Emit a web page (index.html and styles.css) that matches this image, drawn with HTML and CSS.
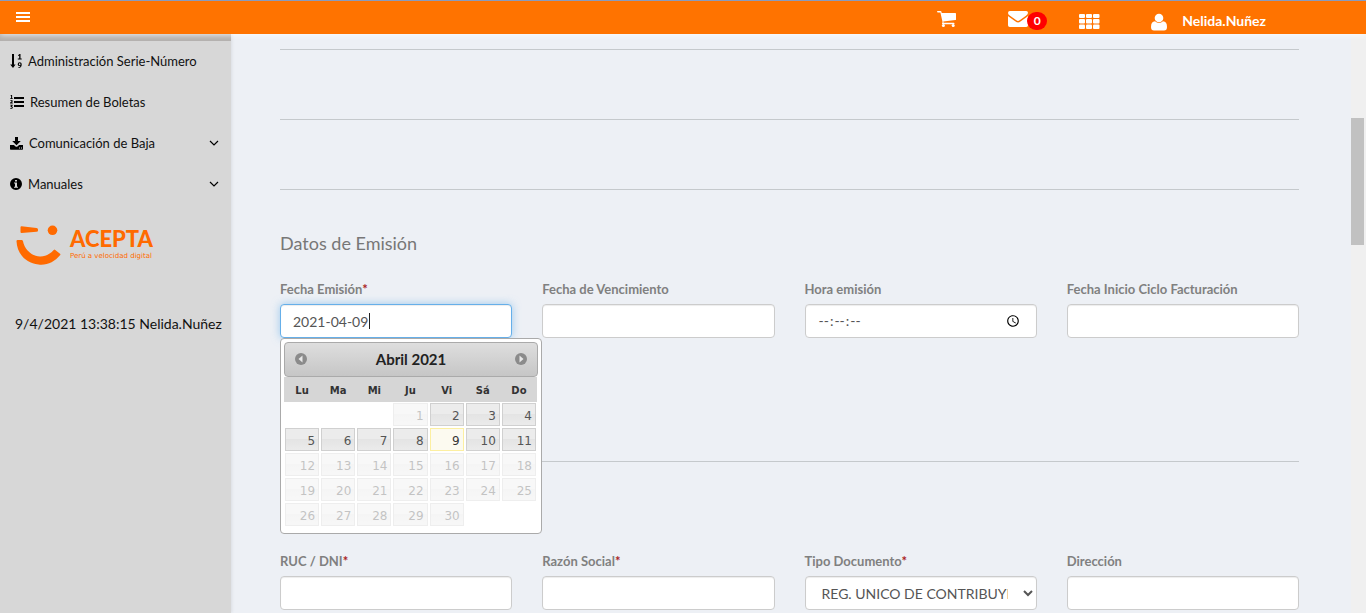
FILE: index.html
```html
<!DOCTYPE html>
<html lang="es">
<head>
<meta charset="utf-8">
<meta name="viewport" content="width=device-width, initial-scale=1">
<title>Acepta - Datos de Emisión</title>
<link rel="stylesheet" href="styles.css">
</head>
<body>
<header class="topbar">
  <button class="icon-button" type="button" aria-label="Menú">
    <svg width="14" height="12" viewBox="0 0 14 12" fill="currentColor"><path d="M0 1h14v2H0zM0 5h14v2H0zM0 9h14v2H0z"/></svg>
  </button>
  <nav class="topbar-actions" aria-label="Accesos">
    <button class="icon-button" type="button" aria-label="Carrito">
      <svg width="20" height="20" viewBox="0 0 20 20" fill="currentColor"><path d="M0 .6Q0 0 .7 0H3.500q.8 0 .95.8L4.700 2H18.300q.7 0 .7.7V8.400q0 .6-.6.7L6.300 10.500l.3 1.300H16.800q.7 0 .7.7t-.7.7H5.700q-.7 0-.7-.7 0-.3.6-1.300L3.400 1.400H.7Q0 1.300 0 .6z"/><circle cx="6.400" cy="14.600" r="1.500"/><circle cx="16.200" cy="14.600" r="1.500"/></svg>
    </button>
    <button class="icon-button mail" type="button" aria-label="Mensajes">
      <svg width="20" height="20" viewBox="0 0 20 20" fill="currentColor"><path d="M1.800 0h16.400Q20 0 20 1.700 20 3.300 18 4.800l-6 4.300q-1.300 1-2 1t-2-1L2 4.800Q0 3.300 0 1.900 0 0 1.800 0zM0 4.900q.5.500 1.200 1l6 4.300q1.700 1.200 2.800 1.200t2.800-1.200l6-4.300q.7-.5 1.200-1v9.300q0 1.800-1.800 1.800H1.800Q0 16 0 14.200z"/></svg>
      <span class="badge">0</span>
    </button>
    <button class="icon-button" type="button" aria-label="Aplicaciones">
      <svg width="21" height="20" viewBox="0 0 21 20" fill="currentColor"><rect y="3" width="6" height="4" rx="1"/><rect x="7" y="3" width="6" height="4" rx="1"/><rect x="14" y="3" width="6.500" height="4" rx="1"/><rect y="8" width="6" height="4.500" rx="1"/><rect x="7" y="8" width="6" height="4.500" rx="1"/><rect x="14" y="8" width="6.500" height="4.500" rx="1"/><rect y="13.600" width="6" height="4.400" rx="1"/><rect x="7" y="13.600" width="6" height="4.400" rx="1"/><rect x="14" y="13.600" width="6.500" height="4.400" rx="1"/></svg>
    </button>
    <a class="user" href="#">
      <svg width="16" height="20" viewBox="0 0 16 20" fill="currentColor"><circle cx="8" cy="7" r="4.300"/><path d="M4 10.200Q0 10.400 0 16q0 3.600 3 3.600h10q3 0 3-3.600 0-5.600-4-5.800-1.700 1.700-4 1.700t-4-1.700z"/></svg>
      <span>Nelida.Nuñez</span>
    </a>
  </nav>
</header>

<div class="layout">
  <aside class="sidebar">
    <ul class="menu">
      <li><a class="menu-link" href="#">
        <svg width="12" height="14" viewBox="0 0 12 14" fill="currentColor"><path d="M2 0h2v10.500h1.600L3 14 .2 10.500H2zM8 1.200 9.500 0h1v4.600h1.200v1H7.800v-1h1.400V1.600L8 2z"/><path d="M9.700 8.300a2 2 0 0 0-2 2c0 1.200.8 1.800 1.700 1.800.5 0 .8-.1 1.100-.4-.2.800-.8 1.300-2 1.300v.9c2.200 0 3.200-1.300 3.200-3.500 0-1.300-.8-2.100-2-2.100zm0 1c.5 0 .8.400.8 1s-.3.900-.8.900-.8-.4-.8-.9.300-1 .8-1z"/></svg>
        <span>Administración Serie-Número</span></a></li>
      <li><a class="menu-link" href="#">
        <svg width="14" height="14" viewBox="0 0 14 14" fill="currentColor"><path d="M4 2h10v2H4zM4 6h10v2H4zM4 10h10v2H4zM.2.600 1.400 0h.7v3.200h.7V4H.2v-.8h.9V1zM.2 5.400c1-.8 2.500-.5 2.500.5 0 .8-.7 1.100-1.200 1.700h1.300v.8H.1v-.8C.8 6.900 1.700 6.300 1.700 5.900S.9 5.700.5 6zM.2 9.700h2.500v.7l-.9.900c.7.100 1 .6 1 1.100 0 1.400-1.600 1.700-2.700 1l.3-.7c.7.400 1.400.3 1.400-.2s-.5-.6-1.100-.5l-.2-.5.900-1H.2z"/></svg>
        <span>Resumen de Boletas</span></a></li>
      <li><a class="menu-link" href="#">
        <svg width="13" height="13" viewBox="0 0 13 13" fill="currentColor"><path d="M5 0h3v4h2.800L6.500 8.300 2.200 4H5zM0 8h3.900l1.400 1.300q1.200 1 2.400 0L9.100 8H13v4q0 .7-.7.700H.7Q0 12.700 0 12zm9 2.600v1h1v-1zm2 0v1h1v-1z" fill-rule="evenodd"/></svg>
        <span>Comunicación de Baja</span>
        <svg class="chevron" width="10" height="6" viewBox="0 0 10 6"><path d="m1 1 4 4 4-4" fill="none" stroke="currentColor" stroke-width="1.200"/></svg></a></li>
      <li><a class="menu-link" href="#">
        <svg width="12" height="12" viewBox="0 0 12 12" fill="currentColor"><path fill-rule="evenodd" d="M6 0a6 6 0 1 0 0 12A6 6 0 0 0 6 0zM5 2v1.600h2V2zM4 4.600v1h1v3.100H4v1.100h4V8.700H7V4.600z"/></svg>
        <span>Manuales</span>
        <svg class="chevron" width="10" height="6" viewBox="0 0 10 6"><path d="m1 1 4 4 4-4" fill="none" stroke="currentColor" stroke-width="1.200"/></svg></a></li>
    </ul>
    <div class="brand">
      <svg width="46" height="42" viewBox="0 0 46 42" fill="#ff6a00"><path d="M5.500 2.200 20.500 4Q22 4.200 22 5.500V6.400Q22 7.600 20.500 7.700L5.500 9Q4.500 9 4.500 8V3.200Q4.500 2.200 5.500 2.200z"/><circle cx="36.500" cy="6.300" r="4.800"/><path d="M1.500 16H5.500Q6.700 16 7 17.200C8.500 25 15 32 24 32.500c6 .2 10.500-3 13.700-6.500q.8-.8 1.600 0l4.700 3.700q.8.700 0 1.600C38.500 38 31 41.500 22.500 40.500 9 39 1 29 .500 17.200Q.500 16 1.500 16z"/></svg>
      <div class="brand-text">
        <strong class="brand-name">ACEPTA</strong>
        <span class="brand-tagline">Perú a velocidad digital</span>
      </div>
    </div>
    <p class="session">9/4/2021 13:38:15 Nelida.Nuñez</p>
  </aside>

  <main class="content">
    <hr class="divider">
    <hr class="divider">
    <hr class="divider">
    <section class="issue">
      <h2 class="section-title">Datos de Emisión</h2>
      <div class="fields">
        <div class="field">
          <label for="fecha">Fecha Emisión<span class="required">*</span></label>
          <div class="date-box">
            <input class="control focused" id="fecha" type="text" value="2021-04-09">
            <span class="caret" aria-hidden="true"></span>
            <div class="datepicker">
              <div class="dp-header">
                <button class="dp-nav" type="button" aria-label="Anterior"><svg width="12" height="12" viewBox="0 0 12 12"><circle cx="6" cy="6" r="6" fill="#8b8b8b"/><path d="M7.500 2.500v7L3.500 6z" fill="#e8e8e8"/></svg></button>
                <span>Abril 2021</span>
                <button class="dp-nav" type="button" aria-label="Siguiente"><svg width="12" height="12" viewBox="0 0 12 12"><circle cx="6" cy="6" r="6" fill="#8b8b8b"/><path d="M4.500 2.500v7L8.500 6z" fill="#e8e8e8"/></svg></button>
              </div>
              <table class="dp-table">
                <thead><tr><th>Lu</th><th>Ma</th><th>Mi</th><th>Ju</th><th>Vi</th><th>Sá</th><th>Do</th></tr></thead>
                <tbody>
                  <tr><td></td><td></td><td></td><td><span class="day off">1</span></td><td><a class="day" href="#">2</a></td><td><a class="day" href="#">3</a></td><td><a class="day" href="#">4</a></td></tr>
                  <tr><td><a class="day" href="#">5</a></td><td><a class="day" href="#">6</a></td><td><a class="day" href="#">7</a></td><td><a class="day" href="#">8</a></td><td><a class="day today" href="#">9</a></td><td><a class="day" href="#">10</a></td><td><a class="day" href="#">11</a></td></tr>
                  <tr><td><span class="day off">12</span></td><td><span class="day off">13</span></td><td><span class="day off">14</span></td><td><span class="day off">15</span></td><td><span class="day off">16</span></td><td><span class="day off">17</span></td><td><span class="day off">18</span></td></tr>
                  <tr><td><span class="day off">19</span></td><td><span class="day off">20</span></td><td><span class="day off">21</span></td><td><span class="day off">22</span></td><td><span class="day off">23</span></td><td><span class="day off">24</span></td><td><span class="day off">25</span></td></tr>
                  <tr><td><span class="day off">26</span></td><td><span class="day off">27</span></td><td><span class="day off">28</span></td><td><span class="day off">29</span></td><td><span class="day off">30</span></td><td></td><td></td></tr>
                </tbody>
              </table>
            </div>
          </div>
        </div>
        <div class="field"><label for="venc">Fecha de Vencimiento</label><input class="control" id="venc" type="text"></div>
        <div class="field"><label for="hora">Hora emisión</label><input class="control" id="hora" type="time" step="1"></div>
        <div class="field"><label for="ciclo">Fecha Inicio Ciclo Facturación</label><input class="control" id="ciclo" type="text"></div>
      </div>
    </section>
    <hr class="divider">
    <section class="receiver">
      <div class="fields">
        <div class="field"><label for="ruc">RUC / DNI<span class="required">*</span></label><input class="control" id="ruc" type="text"></div>
        <div class="field"><label for="razon">Razón Social<span class="required">*</span></label><input class="control" id="razon" type="text"></div>
        <div class="field"><label for="tipo">Tipo Documento<span class="required">*</span></label>
          <select class="control" id="tipo"><option>REG. UNICO DE CONTRIBUYENTES</option></select></div>
        <div class="field"><label for="dir">Dirección</label><input class="control" id="dir" type="text"></div>
      </div>
    </section>
  </main>
  <div class="scrollbar" aria-hidden="true"><div class="thumb"></div></div>
</div>
</body>
</html>
```
FILE: styles.css
```css
* { box-sizing: border-box; }

body {
  margin: 0;
  min-height: 100vh;
  display: flex;
  flex-direction: column;
  font-family: Lato, "Open Sans", sans-serif;
  font-size: 14px;
  line-height: 20px;
  color: #777;
  background: #edf0f5;
}

svg { display: block; flex: none; }
a { color: inherit; text-decoration: none; }

.topbar {
  position: relative;
  z-index: 2;
  height: 34px;
  display: flex;
  align-items: center;
  justify-content: space-between;
  padding: 0 100px 2px 16px;
  border-top: 1px solid #8a9bbd;
  background: #ff7300;
  color: #fff;
  box-shadow: 0 1px 6px rgba(255, 255, 255, 0.8);
}

.icon-button { padding: 0; border: 0; background: none; color: inherit; }
.topbar-actions { display: flex; align-items: center; gap: 51px; padding-top: 8px; }
.mail { position: relative; }

.badge {
  position: absolute;
  top: 1px;
  left: 19px;
  width: 20px;
  border-radius: 9px;
  background: #f00;
  font: bold 12px/18px Lato, sans-serif;
  text-align: center;
}

.user { display: flex; align-items: center; gap: 15px; font-weight: bold; }

.layout { flex: 1; display: flex; }

.sidebar {
  width: 231px;
  flex: none;
  border-top: 7px solid #b2afad;
  background: #d7d7d7;
  color: #111;
  box-shadow: 1px 0 3px rgba(0, 0, 0, 0.08);
}

.menu { margin: 0; padding: 0; list-style: none; font-size: 13px; }
.menu-link { display: flex; align-items: center; gap: 6px; height: 41px; padding: 0 12px 1px 10px; }
.menu-link svg { color: #000; }
.chevron { margin-left: auto; }

.brand { display: flex; gap: 8px; padding: 19px 16px 0; color: #ff6a00; }
.brand-text { display: flex; flex-direction: column; padding-top: 1px; }
.brand-name { font-size: 22px; line-height: 27px; font-weight: 900; }
.brand-tagline { font: 7px/8px "DejaVu Sans", sans-serif; }

.session { margin: 48px 0 0; padding-left: 15px; white-space: nowrap; }

.content { flex: 1; min-width: 0; padding: 15px 52px 3px 49px; }
.divider { height: 1px; margin: 0; border: 0; background: #c5c9cc; }
.divider + .divider { margin-top: 69px; }

.issue { padding: 43px 0 123px; }
.receiver { padding-top: 89px; }
.section-title { margin: 0 0 26px; font-size: 18px; line-height: 20px; font-weight: 400; }

.fields { display: grid; grid-template-columns: repeat(4, minmax(0, 1fr)); gap: 30px; }
.field { display: flex; flex-direction: column; gap: 5px; }
.field label { font-size: 13px; font-weight: bold; color: #808080; }
.required { color: #a22; }

.control {
  width: 100%;
  height: 34px;
  padding: 6px 12px;
  border: 1px solid #ccc;
  border-radius: 4px;
  outline: none;
  background: #fff;
  color: #555;
  font: 14px/20px Lato, sans-serif;
  box-shadow: inset 0 1px 1px rgba(0, 0, 0, 0.075);
}

.control.focused {
  border-color: #66afe9;
  box-shadow: inset 0 1px 1px rgba(0, 0, 0, 0.075), 0 0 8px rgba(102, 175, 233, 0.6);
}

.control::-webkit-datetime-edit-ampm-field { display: none; }

.date-box { position: relative; }
.caret { position: absolute; top: 9px; left: 89px; width: 1px; height: 16px; background: #222; }

.datepicker {
  position: absolute;
  z-index: 1;
  top: 34px;
  left: 0;
  width: 262px;
  padding: 3px;
  border: 1px solid #aaa;
  border-radius: 4px;
  background: #fff;
  color: #222;
}

.dp-header {
  display: flex;
  align-items: center;
  justify-content: space-between;
  height: 35px;
  padding: 0 10px 1px;
  border: 1px solid #aaa;
  border-radius: 4px;
  background: linear-gradient(#dedede, #c6c6c6);
  font-size: 15px;
  font-weight: bold;
}

.dp-nav { padding: 0; border: 0; background: none; }

.dp-table {
  width: 253px;
  margin-bottom: 3px;
  table-layout: fixed;
  border-collapse: collapse;
  font-family: "DejaVu Sans", sans-serif;
}

.dp-table th { height: 25px; padding: 2px 0 0; background: #d6d6d6; font-size: 10px; color: #333; }
.dp-table td { height: 25px; padding: 1px; }

.day {
  display: block;
  height: 23px;
  padding: 0 3px;
  border: 1px solid #d0d0d0;
  background: linear-gradient(#ececec 50%, #e4e4e4 50%, #ebebeb);
  color: #555;
  font-size: 12px;
  line-height: 24px;
  text-align: right;
}

.day.today { border-color: #fcefa1; background: #fcfaf0; color: #363636; }
.day.off { opacity: 0.35; }

.scrollbar { width: 15px; flex: none; padding: 84px 2px 0 0; background: #f0f0f0; }
.thumb { height: 127px; background: #c1c1c1; }
```
